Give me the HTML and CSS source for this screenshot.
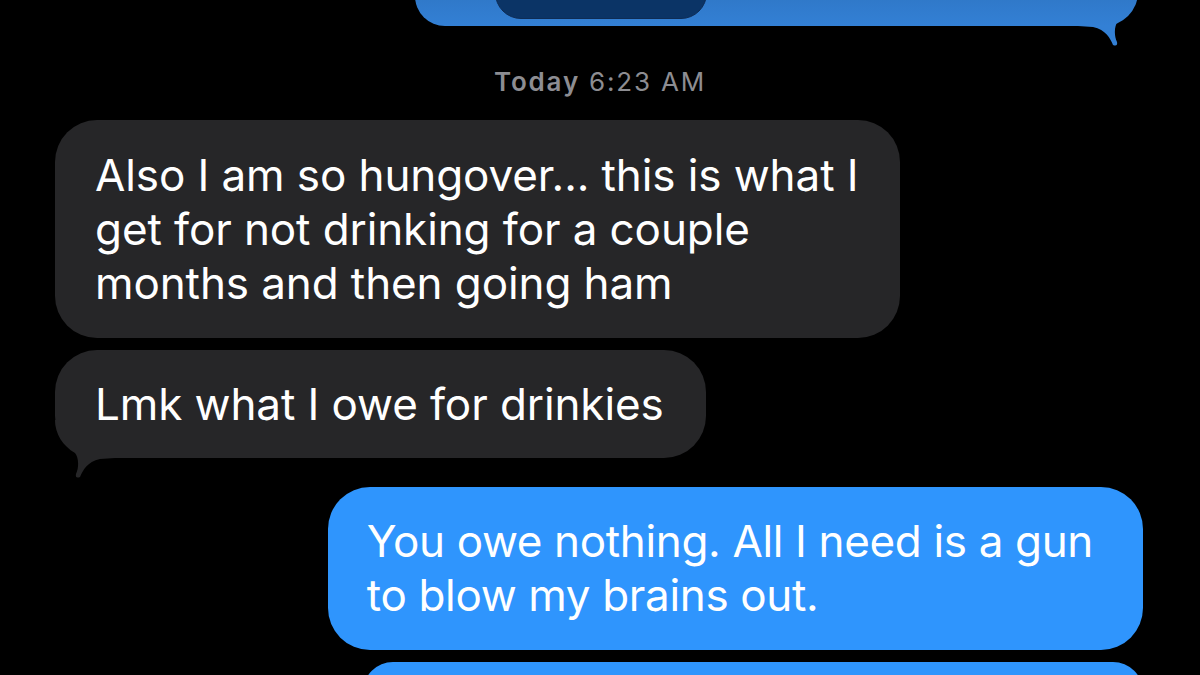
FILE: index.html
```html
<!DOCTYPE html>
<html>
<head>
  <meta charset="UTF-8">
  <title>Messages</title>
  <link rel="stylesheet" href="styles.css">
</head>
<body>
<div class="thread">
  <div class="msg sent top">
    <div class="preview"></div>
    <svg class="tail tail-right" width="60" height="60" viewBox="0 0 60 60">
      <defs>
        <linearGradient id="topBlue" gradientUnits="userSpaceOnUse" x1="0" y1="-68" x2="0" y2="38">
          <stop offset="0" stop-color="#2663a6"/>
          <stop offset="1" stop-color="#3380d5"/>
        </linearGradient>
      </defs>
      <path d="M0,0 C0,14 8,26 20,33 C24,38 24,48 21,54 Q20,59 25,57 C28,50 32,42 45,39 L60,38 V0 Z" fill="url(#topBlue)"/>
    </svg>
  </div>

  <div class="stamp"><b>Today</b> 6:23 AM</div>

  <div class="msg recv">Also I am so hungover... this is what I<br>get for not drinking for a couple<br>months and then going ham</div>

  <div class="msg recv last">Lmk what I owe for drinkies
    <svg class="tail tail-left" width="60" height="60" viewBox="0 0 60 60">
      <path d="M0,0 C0,14 8,26 20,33 C24,38 24,48 21,54 Q20,59 25,57 C28,50 32,42 45,39 L60,38 V0 Z" fill="#262628"/>
    </svg>
  </div>

  <div class="msg sent blue">You owe nothing. All I need is a gun<br>to blow my brains out.</div>

  <div class="msg sent blue next"></div>
</div>
</body>
</html>
```

FILE: styles.css
```css
body {
  margin: 0;
  background: #000;
  font-family: Inter, "Noto Sans", sans-serif;
  overflow: hidden;
}
.thread {
  width: 1200px;
  height: 675px;
  display: flex;
  flex-direction: column;
  overflow: hidden;
}
.thread > * {
  flex-shrink: 0;
}
.msg {
  position: relative;
  color: #fff;
  font-size: 44px;
  letter-spacing: -0.1px;
  line-height: 54px;
  border-radius: 42px;
  padding: 28px 42px 28px 40px;
  box-sizing: border-box;
}
.recv {
  align-self: flex-start;
  margin-left: 55px;
  background: #262628;
  margin-top: 12px;
}
.recv.last {
  padding-top: 27px;
  padding-bottom: 27px;
}
.sent.blue {
  align-self: flex-end;
  margin-right: 57px;
  background: #2f95fd;
  letter-spacing: -0.35px;
  padding: 27px 50px 28px 39px;
  margin-top: 12px;
}
.recv.last + .sent.blue {
  margin-top: 29px;
}
.sent.top {
  margin-top: -80px;
  margin-left: 415px;
  margin-right: 62px;
  height: 106px;
  background: linear-gradient(#2663a6, #3380d5);
  border-radius: 0 0 34px 30px;
  padding: 0;
}
.preview {
  position: absolute;
  left: 80px;
  bottom: 7px;
  width: 210px;
  height: 80px;
  background: #0b3466;
  border: 1px solid #0e2c55;
  border-radius: 0 0 26px 26px;
}
.tail {
  position: absolute;
}
.tail-left {
  left: 0;
  bottom: -22px;
}
.tail-right {
  right: 0;
  bottom: -22px;
  transform: scaleX(-1);
}
.stamp {
  align-self: center;
  color: #8d8d92;
  font-size: 26px;
  letter-spacing: 1.8px;
  line-height: 34px;
  margin-top: 39px;
  margin-bottom: 9px;
}
.stamp b {
  font-weight: 600;
}
.next {
  width: 780px;
  height: 60px;
}
```
